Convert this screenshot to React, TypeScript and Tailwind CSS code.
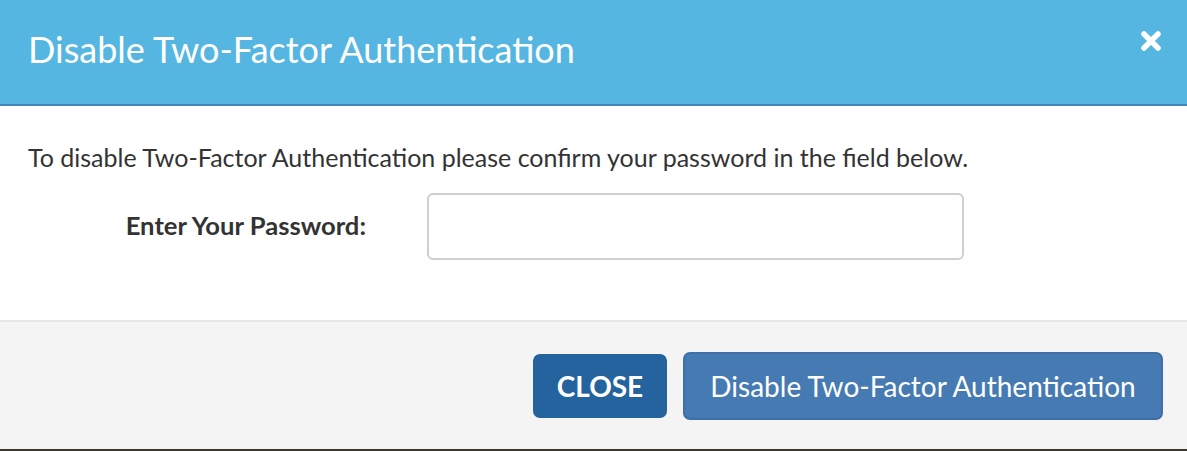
import React from "react";

export default function App() {
  return (
    <div className="w-[1187px] h-[451px] bg-[#3a3a2e] overflow-hidden" style={{ fontFamily: "Lato, 'Open Sans', sans-serif" }}>
      <div className="flex flex-col h-[449px]">
        <div className="h-[106px] bg-[#56b6e2] border-b-2 border-[#4587bd] flex items-center justify-between pl-[28px] pr-[25px] shrink-0">
          <h1 className="text-white text-[36px] leading-none font-normal pb-[6px]">Disable Two-Factor Authentication</h1>
          <svg width="22" height="22" viewBox="0 0 22 22" className="mb-[22px]">
            <path d="M4 4 L18 18 M18 4 L4 18" stroke="white" strokeWidth="5.5" strokeLinecap="round" />
          </svg>
        </div>
        <div className="bg-white flex-1 flex flex-col pl-[28px] pt-[36px]">
          <p className="text-[#333] text-[25px] leading-[30px]">To disable Two-Factor Authentication please confirm your password in the field below.</p>
          <div className="flex items-center mt-[21px]">
            <label className="w-[399px] text-right pr-[61px] text-[25.6px] font-bold text-[#333] pb-[2px]">Enter Your Password:</label>
            <input type="password" className="w-[537px] h-[67px] rounded-[6px] border-2 border-[#cfcfcf] bg-white outline-none" />
          </div>
        </div>
        <div className="h-[129px] bg-[#f4f4f4] border-t-2 border-[#e6e6e6] flex items-center justify-end gap-[16px] pr-[24px] shrink-0">
          <button className="h-[64px] w-[134px] rounded-[7px] bg-[#24639e] text-white text-[28px] font-bold">CLOSE</button>
          <button className="h-[68px] w-[480px] rounded-[7px] bg-[#467ab3] border-2 border-[#3f6fa6] text-white text-[28px] font-normal">Disable Two-Factor Authentication</button>
        </div>
      </div>
    </div>
  );
}
